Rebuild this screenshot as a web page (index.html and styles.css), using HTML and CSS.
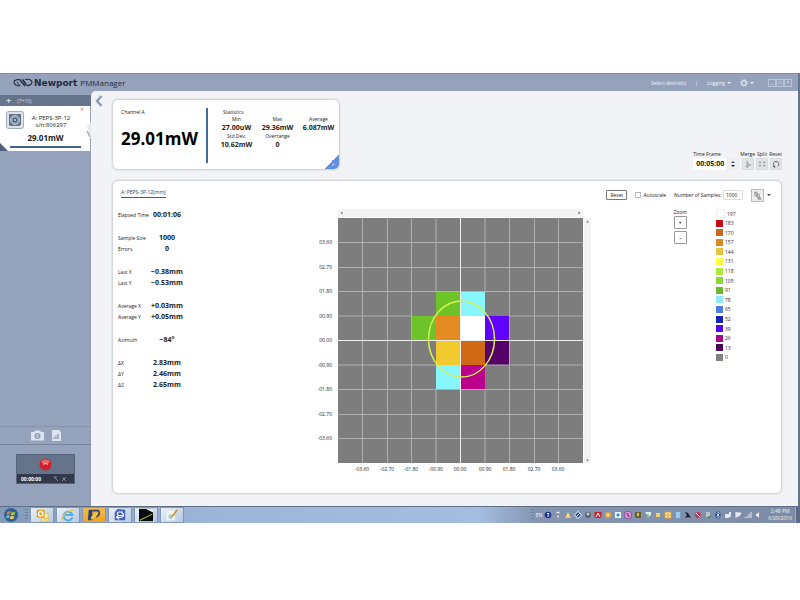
FILE: index.html
```html
<!DOCTYPE html>
<html lang="en">
<head>
<meta charset="utf-8">
<title>Newport PMManager</title>
<link rel="stylesheet" href="styles.css">
</head>
<body>
<div class="desktop">
<div class="window">
  <header class="titlebar">
    <div class="brand">
      <svg class="brand-mark" viewBox="0 0 20 10"><g fill="none" stroke="#23293a"><path d="M8 2C5 .8 1 2 1 4.500c0 2 3 3.500 6 3.500" stroke-width="1.100"/><path d="M5 3.500c-1.500 1 0 3 2.500 3.500" stroke-width=".9"/><path d="M7 2l5 6M9.500 1.500l4 5.500" stroke-width="1.400"/><path d="M12 1.500c4-.8 7 .5 7 2.500s-2.500 4-5.500 3.500" stroke-width="1.100"/></g></svg>
      <span class="brand-name">Newport</span>
      <span class="app-name">PMManager</span>
    </div>
    <nav class="menu">
      <button>Select device(s)</button>
      <span class="bar">|</span>
      <button>Logging <i class="caret"></i></button>
      <button aria-label="Settings" class="gear"><svg viewBox="0 0 8 8"><circle cx="4" cy="4" r="2.300" fill="none" stroke="#dfe5ef" stroke-width="1.300"/><circle cx="4" cy="4" r="3.400" fill="none" stroke="#dfe5ef" stroke-width="1" stroke-dasharray="1.300 1.370"/></svg> <i class="caret"></i></button>
      <div class="winctl"><button aria-label="Minimize">_</button><button aria-label="Maximize">□</button><button aria-label="Close">×</button></div>
    </nav>
  </header>
  <aside class="sidebar">
    <div class="sidehead"><b>+</b><span>(T+10)</span></div>
    <section class="device">
      <svg class="sensor" viewBox="0 0 18 18"><rect x=".5" y=".5" width="17" height="17" rx="2" fill="#dce3ec" stroke="#a3adbd"/><path d="M3 3h12v11l-2 1H4l-1-1z" fill="#66758b"/><circle cx="9" cy="9" r="4.500" fill="#8fa0b6" stroke="#c3cfdd" stroke-width=".8"/><circle cx="9" cy="9" r="2.300" fill="#4a5870"/><circle cx="9" cy="9" r="1" fill="#d7e2ee"/></svg>
      <div class="device-name">A: PEPS-3P-12<br>s/n:806297</div>
      <button class="close" aria-label="Remove device">×</button>
      <strong>29.01mW</strong>
      <i class="fold"></i>
    </section>
    <div class="side-tools">
      <button aria-label="Snapshot"><svg width="15" height="11" viewBox="0 0 15 11"><path d="M1 2h3l1-1.500h5L11 2h3v8.500H1z" fill="#dce3ee"/><circle cx="7.500" cy="6" r="3" fill="#8f9db4"/><circle cx="7.500" cy="6" r="1.700" fill="#dce3ee"/><path d="M5 5l2 1.500L10 5" fill="none" stroke="#75849e" stroke-width=".8"/></svg></button>
      <button aria-label="Report"><svg width="9" height="11" viewBox="0 0 9 11"><path d="M0 0h7l2 2v9H0z" fill="#dce3ee"/><path d="M2 9V7m2 2V5.500M6 9V4" stroke="#8797b0" stroke-width="1.200"/></svg></button>
    </div>
    <div class="rec-area"><div class="recorder">
      <button class="record" aria-label="Record"><svg width="13" height="13" viewBox="0 0 13 13"><circle cx="6.500" cy="6.500" r="6" fill="#d0202c"/><ellipse cx="6.500" cy="3.800" rx="3.800" ry="2.300" fill="#e8686c"/><path d="M4 6.500c1-1 4-1 5 0" stroke="#f8c9ca" fill="none" stroke-width=".9"/></svg></button>
      <div class="rec-foot"><span>00:00:00</span><svg width="14" height="6" viewBox="0 0 14 6"><path d="M1 1h3M1 1l4 4M9 5l4-4M9.500 1.500L13 5" stroke="#9aa3b2" stroke-width=".8" fill="none"/></svg></div>
    </div></div>
    <svg class="grip" viewBox="0 0 5 18"><path d="M5 0v18L1 12l2-3-2-3z" fill="#e4e7ec"/><path d="M1 10L4 16" stroke="#a9b0bc" stroke-width="1.500"/></svg>
  </aside>
  <main class="content">
    <button class="back" aria-label="Back"><svg width="8" height="12" viewBox="0 0 8 12"><path d="M6.500 1L2 6l4.500 5" fill="none" stroke="#8d99b5" stroke-width="2.400"/></svg></button>
    <div class="top">
      <section class="card channel">
        <div class="reading"><span>Channel A</span><strong>29.01mW</strong></div>
        <div class="statistics">
          <h2>Statistics</h2>
          <dl>
            <div><dt>Min</dt><dd>27.00uW</dd></div>
            <div><dt>Max</dt><dd>29.36mW</dd></div>
            <div><dt>Average</dt><dd>6.087mW</dd></div>
            <div><dt>Std.Dev.</dt><dd>10.62mW</dd></div>
            <div><dt>Overrange</dt><dd>0</dd></div>
          </dl>
        </div>
        <i class="corner">»</i>
      </section>
      <div class="timing">
        <label class="tf"><span>Time Frame</span><span class="tf-row"><input value="00:05:00"><i class="spin"><i class="up"></i><i class="caret"></i></i></span></label>
        <label><span>Merge</span><button><svg viewBox="0 0 12 12"><path d="M5 2v7M3 8l2 2 2-2M5 3l2 4h3" stroke="#a4a6aa" fill="none" stroke-width="1.300"/></svg></button></label>
        <label><span>Split</span><button><svg viewBox="0 0 12 12"><path d="M2 3h3v2H2zM7 3h3v2H7zM2 7h3v2H2zM7 7h3v2H7z" fill="#a4a6aa"/></svg></button></label>
        <label><span>Reset</span><button><svg viewBox="0 0 12 12"><path d="M4.500 9.200A3.300 3.300 0 1 1 8 9" stroke="#55585f" fill="none" stroke-width="1.100"/><path d="M2 8.500l3-.5v3z" fill="#55585f"/></svg></button></label>
      </div>
    </div>
    <section class="card position">
      <div class="toolbar">
        <a href="#sensor" class="tab">A: PEPS-3P-12[mm]</a>
        <button class="reset">Reset</button>
        <label class="auto"><input type="checkbox">Autoscale</label>
        <label class="samples">Number of Samples: <input value="1000"></label>
        <button class="tool" aria-label="Graph options"><svg viewBox="0 0 12 12"><path d="M3 2.500h2.500v4H3zM5.500 4.500H8v4H5.500zM3 2l6 8M7 8.500h2.500v2H7z" fill="none" stroke="#888" stroke-width=".8"/></svg></button><i class="caret dark"></i>
      </div>
      <div class="panel">
        <div class="measures">
          <dl><div><dt>Elapsed Time</dt><dd>00:01:06</dd></div></dl>
          <dl><div><dt>Sample Size</dt><dd>1000</dd></div><div><dt>Errors</dt><dd>0</dd></div></dl>
          <dl><div><dt>Last X</dt><dd>−0.38mm</dd></div><div><dt>Last Y</dt><dd>−0.53mm</dd></div></dl>
          <dl><div><dt>Average X</dt><dd>+0.03mm</dd></div><div><dt>Average Y</dt><dd>+0.05mm</dd></div></dl>
          <dl><div><dt>Azimuth</dt><dd>−84°</dd></div></dl>
          <dl><div><dt>ΔX</dt><dd>2.83mm</dd></div><div><dt>ΔY</dt><dd>2.46mm</dd></div><div><dt>Δδ</dt><dd>2.65mm</dd></div></dl>
        </div>
        <svg class="plot" viewBox="0 0 274 266" role="img" aria-label="Beam position">
          <path d="M20 0h245v8H20zM266 9h7v245h-7z" fill="#f3f3f3"/>
          <path d="M22.500 4l2-1.500v3zM262.500 4l-2-1.500v3zM268 13.500l1.500-2 1.500 2zM268 250.500l1.500 2 1.500-2z" fill="#777"/>
          <path d="M20 9h245v245H20z" fill="#7d7d7d"/>
          <path d="M118 82h24v25h-24zM93 107h25v24H93z" fill="#6cc428"/>
          <path d="M142 82h25v25h-25zM118 156h24v24h-24z" fill="#88f6ff"/>
          <path d="M118 107h24v24h-24z" fill="#e68a22"/>
          <path d="M142 107h25v24h-25z" fill="#fff"/>
          <path d="M167 107h24v24h-24z" fill="#6100ff"/>
          <path d="M118 131h24v25h-24z" fill="#f2ca2d"/>
          <path d="M142 131h25v25h-25z" fill="#d06a17"/>
          <path d="M167 131h24v25h-24z" fill="#56006a"/>
          <path d="M142 156h25v24h-25z" fill="#bd008b"/>
          <path d="M44.500 9v245M69.500 9v245M93.500 9v245M118 9v73M118 180v74M167 9v73M167 180v74M191.500 9v245M216.500 9v245M240.500 9v245M20 33.500h245M20 58.500h245M20 82.500h245M20 107h73M191 107h74M20 156h98M167 156h98M20 180.500h245M20 205.500h245M20 229.500h245" stroke="#b0b0b0"/>
          <path d="M142.500 9v245M20 131.500h245" stroke="#f0f0f0"/>
          <ellipse cx="143.500" cy="130" rx="33" ry="38" fill="none" stroke="#d5f052" stroke-width="1.500"/>
          <g class="ylab"><text x="14" y="35">03.60</text><text x="14" y="60">02.70</text><text x="14" y="84">01.80</text><text x="14" y="109">00.90</text><text x="14" y="133">00.00</text><text x="14" y="158">-00.90</text><text x="14" y="182">-01.80</text><text x="14" y="207">-02.70</text><text x="14" y="231">-03.60</text></g>
          <g class="xlab"><text x="44" y="262">-03.60</text><text x="69" y="262">-02.70</text><text x="93" y="262">-01.80</text><text x="118" y="262">-00.90</text><text x="142" y="262">00.00</text><text x="167" y="262">00.90</text><text x="191" y="262">01.80</text><text x="216" y="262">02.70</text><text x="240" y="262">03.60</text></g>
        </svg>
        <div class="zoom"><span>Zoom</span><button>+</button><button>-</button></div>
        <ul class="legend">
          <li class="c197">197</li><li class="c183">183</li><li class="c170">170</li><li class="c157">157</li><li class="c144">144</li><li class="c131">131</li><li class="c118">118</li><li class="c105">105</li><li class="c91">91</li><li class="c78">78</li><li class="c65">65</li><li class="c52">52</li><li class="c39">39</li><li class="c26">26</li><li class="c13">13</li><li class="c0">0</li>
        </ul>
      </div>
    </section>
  </main>
</div>
<footer class="taskbar">
  <button class="start" aria-label="Start"><svg width="16" height="16" viewBox="0 0 16 16"><circle cx="8" cy="8" r="7.500" fill="#2f5f96" stroke="#7fa1c7"/><path d="M4 5c1.500-1 2.500-1 3.700-.4L7 7.600c-1-.6-2-.6-3.500.2z" fill="#e87b35"/><path d="M8.500 4.900c1.200.6 2.500.5 3.800-.1l-.8 3c-1.200.6-2.300.6-3.600.1z" fill="#9ccc45"/><path d="M3.300 8.700c1.300-.7 2.400-.8 3.500-.1L6 11.500c-1-.6-2-.6-3.400 0z" fill="#58aee8"/><path d="M7.600 8.900c1.200.5 2.500.5 3.700 0l-.8 2.900c-1.200.6-2.300.5-3.600 0z" fill="#f3d04a"/></svg></button>
  <i class="handle"></i>
  <button class="task" aria-label="Outlook"><svg viewBox="0 0 16 16"><path d="M8 6h7v9H7z" fill="#fff0b5" stroke="#e0b850"/><path d="M2 2h9v9H2z" fill="#e8a01b"/><circle cx="6.500" cy="6.500" r="2.500" stroke="#fff" stroke-width="1.500" fill="none"/><path d="M8 11l3.500 2 3.500-2" stroke="#d8a52c" fill="none"/></svg></button>
  <button class="task" aria-label="Internet Explorer"><svg viewBox="0 0 16 16"><path d="M13 10.500A5 5 0 1 1 13 8H4" fill="none" stroke="#4fb0e6" stroke-width="2.400"/><path d="M2 14C-.5 11 9 1 15 3" fill="none" stroke="#e9bc45" stroke-width="1.200"/></svg></button>
  <button class="task active" aria-label="PMManager"><svg viewBox="0 0 16 16"><path d="M2 2h4v12H1z" fill="#28436e"/><path d="M6 3h7c2 2 1 6-2 7l-4 1" fill="none" stroke="#354663" stroke-width="2"/><path d="M4 13c1-5 5-7 8-7l-2 5z" fill="#f7c04a"/></svg></button>
  <button class="task" aria-label="Remote tool"><svg viewBox="0 0 16 16"><path d="M5 1l9 1v12H2V5z" fill="#4662c0"/><path d="M4 10.500h5.500a2.500 2.500 0 0 0 0-5M7 8l-3 2.500L7 13M12 8.500H7a2 2 0 0 1 0-4h4" fill="none" stroke="#fff" stroke-width="1.200"/></svg></button>
  <button class="task" aria-label="Beam viewer"><svg viewBox="0 0 16 16"><path d="M0 1h16v14H0z" fill="#080a0b"/><path d="M1 14L15 7" stroke="#9dc348" stroke-width="1.200"/><path d="M8 1h8v4z" fill="#e8edf0"/></svg></button>
  <button class="task" aria-label="Paint"><svg viewBox="0 0 16 16"><path d="M2 3h9v11H2z" fill="#f3f4ed"/><path d="M4 11c-1-4 4-5 5-2s-3 5-5 2z" fill="#a8c9df"/><path d="M8 10L14 2" stroke="#c49639" stroke-width="2"/></svg></button>
  <div class="tray">
    <i class="handle"></i><span>EN</span>
    <svg viewBox="0 0 8 8"><circle cx="4" cy="4" r="3.300" fill="#1a329b"/><path d="M3 3q1-2 2 0L4 4.500V6" stroke="#fff" fill="none"/></svg>
    <svg viewBox="0 0 8 8"><path d="M2.500 1.500h3M3 5.500h2" stroke="#e7edf3" stroke-width="1.500"/></svg>
    <svg viewBox="0 0 8 8"><path d="M1 7l3-6 3 6z" fill="#f4cb58"/><path d="M4 3v2" stroke="#fff"/></svg>
    <svg viewBox="0 0 8 8"><path d="M4 0l4 4-4 4-4-4z" fill="#fff"/><path d="M4 1l3 3-3 3-3-3z" fill="#1a4fae"/><path d="M2.500 5.500l3-3" stroke="#fff"/></svg>
    <svg viewBox="0 0 8 8"><circle cx="4" cy="4" r="3" fill="#596270"/><circle cx="4" cy="3" r="1.500" fill="#b9d2ba"/></svg>
    <svg viewBox="0 0 8 8"><path d="M.5 1h7v6h-7z" fill="#c91e2c"/><path d="M2 6l2-4 2 4" stroke="#fff" fill="none"/></svg>
    <svg viewBox="0 0 8 8"><circle cx="4" cy="4" r="3" fill="#eda839"/><circle cx="4" cy="4" r="1.200" fill="#fff0ad"/></svg>
    <svg viewBox="0 0 8 8"><path d="M1 1h6v6H1z" fill="#ecf7fb"/><path d="M2 4l2-2 2 2-2 2z" fill="#3899c9"/></svg>
    <svg viewBox="0 0 8 8"><path d="M1 1h6v6H1z" fill="#fff" stroke="#9b2c9b"/><path d="M3 6V2l2 4V2" stroke="#862086" fill="none"/></svg>
    <svg viewBox="0 0 8 8"><path d="M1 1h6v6H1z" fill="#6a622b"/><path d="M3 2h2v3H3z" fill="#edb946"/></svg>
    <svg viewBox="0 0 8 8"><path d="M1 1h6v3L4 6z" fill="#dff1ed"/><path d="M1 4h4" stroke="#45a080"/></svg>
    <svg viewBox="0 0 8 8"><path d="M2 2h4v4H2z" fill="#f0d46c"/></svg>
    <svg viewBox="0 0 8 8"><path d="M1 1h6v6H1z" fill="#fff2bd" stroke="#e69c25"/><circle cx="4" cy="4" r="1.300" fill="none" stroke="#e69c25"/></svg>
    <svg viewBox="0 0 8 8"><path d="M1 1h6v6H1z" fill="#69a2ce"/><path d="M3 1v6M5 1v6" stroke="#dceaf4"/></svg>
    <svg viewBox="0 0 8 8"><path d="M1 1l3 1 3 5-3-1-3 1 2-3z" fill="#171d29"/></svg>
    <svg viewBox="0 0 8 8"><circle cx="4" cy="4" r="3" fill="#c53b5c"/><path d="M2 2l4 4" stroke="#fff"/></svg>
    <svg viewBox="0 0 8 8"><path d="M2 1h4v5H2z" fill="#b9c7cd"/><path d="M4 5l1 2 2-3" stroke="#24883b" fill="none"/></svg>
    <svg viewBox="0 0 8 8"><ellipse cx="4" cy="4" rx="2.500" ry="3.500" fill="#1b4b8e"/><path d="M2.500 2.500l3 3L4 7V1l1.500 1.500-3 3" stroke="#fff" stroke-width=".6" fill="none"/></svg>
    <svg viewBox="0 0 8 8"><path d="M1 3h4v4H1zM5 1h2v5H5z" fill="#e3e9ef"/></svg>
    <svg viewBox="0 0 8 8"><path d="M2 1v6M2 2h5L5 5H2" stroke="#f5f7f9" fill="#dbe2e9"/></svg>
    <svg viewBox="0 0 8 8"><path d="M1 7V6m2 1V5m2 2V3m2 4V1" stroke="#e8edf2"/></svg>
    <svg viewBox="0 0 8 8"><path d="M2 3h1l2-2v6L3 5H2z" fill="#f2f5f8"/></svg>
    <time>2:48 PM<br>6/20/2016</time>
  </div>
  <button class="peek" aria-label="Show desktop"></button>
</footer>
</div>
</body>
</html>
```
FILE: styles.css
```css
* { box-sizing: border-box; }
body { margin: 0; background: #fff; font: 5px/8px "Open Sans", "Noto Sans", sans-serif; color: #222; }
button, input { font: inherit; color: inherit; margin: 0; padding: 0; border: 0; background: none; }
dl, dd, ul, h2 { margin: 0; padding: 0; font-weight: normal; font-size: inherit; }
i { font-style: normal; }
svg { display: block; }
.desktop { display: flex; flex-direction: column; min-height: 100vh; padding: 73px 0 77px; }
.window { flex: 1; display: grid; grid-template: 17px 1fr / 91px 1fr; background: #95a2bb; border-top: 1px solid #7e8ca6; border-right: 2px solid #66758f; }

.titlebar { grid-column: 1 / 3; display: flex; justify-content: space-between; align-items: center; padding: 0 6px 0 13px; }
.brand { display: flex; align-items: center; color: #252b3b; }
.brand-mark { width: 20px; height: 10px; margin-right: 1px; }
.brand-name { font: bold 9px/12px "DejaVu Sans", sans-serif; }
.app-name { font-size: 8px; line-height: 12px; margin-left: 3px; }
.menu { display: flex; align-items: center; gap: 9px; color: #f0f3f8; }
.menu > button { display: flex; align-items: center; gap: 2px; }
.gear svg { width: 8px; height: 8px; }
.caret { display: inline-block; border: 2px solid transparent; border-top-color: currentColor; border-bottom: 0; }
.winctl { display: flex; margin-left: 5px; }
.winctl button { width: 8px; height: 8px; border: 1px solid #b9c4d6; line-height: 5px; }

.sidebar { position: relative; display: flex; flex-direction: column; padding-top: 4px; }
.sidehead { display: flex; align-items: center; gap: 6px; height: 11px; padding-left: 6px; background: #66758b; color: #d4dbe5; }
.sidehead b { font-size: 9px; }
.device { position: relative; display: grid; grid-template-columns: 18px 1fr 8px; column-gap: 2px; height: 45px; margin-right: 1px; padding: 0 4px 0 6px; background: #fff; }
.sensor { width: 18px; height: 18px; margin-top: 5px; }
.device-name { padding: 9px 0 0; font-size: 6px; line-height: 7px; text-align: center; white-space: nowrap; }
.close { align-self: start; color: #8090ad; font-size: 7px; }
.device strong { grid-column: 1 / 4; margin: 0 5px 0 4px; padding-bottom: 3px; border-bottom: 2px solid #45638f; text-align: center; font-size: 8px; line-height: 10px; color: #222; align-self: start; }
.fold { position: absolute; left: 0; bottom: 0; border: 4px solid #52617b; border-top-color: transparent; border-right-color: transparent; }
.grip { position: absolute; right: 0; top: 30px; width: 5px; height: 18px; }
.side-tools { display: flex; justify-content: center; align-items: center; gap: 7px; height: 19px; margin-top: auto; border-top: 1px solid #8794af; border-bottom: 1px solid #77859f; }
.rec-area { height: 61px; padding: 9px 16px; }
.recorder { display: flex; flex-direction: column; height: 30px; background: #66748b; border: 1px solid #56647b; }
.record { flex: 1; display: flex; justify-content: center; align-items: center; }
.rec-foot { display: flex; justify-content: space-between; align-items: center; height: 9px; padding: 0 7px 0 4px; background: #303a4a; color: #fff; }
.rec-foot span { font-weight: bold; }

.content { position: relative; display: flex; flex-direction: column; gap: 10px; padding: 8px 16px 12px 21px; background: #f2f3f6; border-top-left-radius: 5px; }
.back { position: absolute; left: 4px; top: 4px; }
.card { background: #fff; border: 1px solid #d5d6d9; border-radius: 6px; box-shadow: 0 0 0 1px #e6e7e9; }
.top { display: flex; justify-content: space-between; align-items: flex-end; }
.channel { position: relative; display: flex; width: 34%; min-width: 228px; height: 71px; padding: 8px 0 6px 8px; overflow: hidden; }
.reading { display: flex; flex-direction: column; width: 89px; border-right: 2px solid #426c9c; }
.reading strong { margin-top: 11px; font-size: 17px; line-height: 24px; color: #000; }
.statistics { flex: 1; padding-left: 8px; }
.statistics h2 { padding-left: 7px; line-height: 8px; }
.statistics dl { display: grid; grid-template-columns: repeat(3, 41px); row-gap: 1px; text-align: center; }
.statistics dd { font-weight: bold; font-size: 7px; line-height: 9px; color: #222; }
.statistics dt { line-height: 7px; }
.corner { position: absolute; right: 0; bottom: 0; width: 15px; height: 15px; padding: 6px 0 0 8px; background: linear-gradient(135deg, transparent 50%, #628ede 50%); color: #fff; }

.timing { display: flex; gap: 1px; }
.timing label { display: flex; flex-direction: column; align-items: center; }
.timing .tf { align-items: flex-start; }
.timing button { width: 12px; height: 12px; background: #e3e4e7; border: 1px solid #d9dadd; border-radius: 1px; }
.tf-row { display: flex; background: #fff; }
.tf input { width: 34px; padding-left: 3px; font-size: 7px; font-weight: bold; line-height: 10px; color: #222; }
.spin { display: flex; flex-direction: column; justify-content: center; align-items: center; gap: 2px; width: 12px; height: 12px; background: #eceef1; }
.up { border: 2px solid transparent; border-bottom-color: #555; border-top: 0; }

.position { flex: 1; padding: 6px 10px 14px 5px; }
.toolbar { display: flex; align-items: center; height: 16px; }
.tab { margin: 0 auto auto 3px; color: #223f70; text-decoration: none; border-bottom: 1px solid #315c9b; line-height: 10px; }
.reset { width: 21px; height: 10px; border: 1px solid #777; border-radius: 1px; line-height: 7px; }
.auto { display: flex; align-items: center; gap: 2px; margin: 0 8px; }
.auto input { appearance: none; width: 6px; height: 6px; border: 1px solid #bbb; }
.samples input { width: 20px; height: 10px; padding-left: 2px; border: 1px solid #ddd; }
.tool { width: 13px; height: 13px; margin: 0 3px 0 8px; border: 1px solid #bbb; background: #eee; }
.dark { color: #444; }
.panel { display: flex; padding-top: 6px; }
.measures { display: flex; flex-direction: column; gap: 12px; width: 200px; }
.measures dl div { display: grid; grid-template-columns: 33px 32px; align-items: center; justify-items: start; height: 11px; }
.measures dd { justify-self: center; font-weight: bold; font-size: 7px; line-height: 11px; color: #222; white-space: nowrap; }
.plot { width: 274px; flex: none; }
.plot text { font-size: 5px; fill: #222; }
.ylab { text-anchor: end; }
.xlab { text-anchor: middle; }
.zoom { display: flex; flex-direction: column; align-items: center; margin-left: auto; margin-right: 29px; }
.zoom button { width: 13px; height: 13px; margin-bottom: 2px; border: 1px solid #999; border-radius: 1px; font-weight: bold; color: #111; }
.zoom span { line-height: 7px; }
.legend { display: flex; flex-direction: column; justify-content: space-between; width: 55px; height: 153px; list-style: none; color: #422; }
.legend li { display: flex; align-items: center; gap: 2px; height: 9px; }
.legend li::before { content: ""; width: 7px; height: 7px; background: #fff; }
.legend .c197::before { border: 1px solid #f3eeee; }
.legend .c183::before { background: #c90d15; }
.legend .c170::before { background: #c8691f; }
.legend .c157::before { background: #d88a25; }
.legend .c144::before { background: #e6c240; }
.legend .c131::before { background: #fffb45; }
.legend .c118::before { background: #b0e83c; }
.legend .c105::before { background: #8cd83c; }
.legend .c91::before { background: #6bb92f; }
.legend .c78::before { background: #94e9f8; }
.legend .c65::before { background: #4f7fe0; }
.legend .c52::before { background: #1524b2; }
.legend .c39::before { background: #5808e8; }
.legend .c26::before { background: #a9078a; }
.legend .c13::before { background: #480559; }
.legend .c0::before { background: #828282; }

.taskbar { display: flex; align-items: center; gap: 2px; height: 17px; padding-left: 3px; background: linear-gradient(90deg, #8499b6, #9bb4d8 25%, #a4bde0 60%, #8595b0 67%, #7d8ca6); border-top: 1px solid #5f6f88; }
.start { width: 17px; margin-right: 3px; }
.handle { width: 3px; height: 12px; background: repeating-linear-gradient(#6f82a0 0 1px, transparent 1px 3px); }
.task { display: flex; justify-content: center; align-items: center; width: 24px; height: 16px; border: 1px solid #8298b8; background: linear-gradient(135deg, #e9eff6, #b8cae2); }
.task.active { background: linear-gradient(#efba55, #f3a21f); }
.task svg { width: 14px; height: 14px; }
.tray { display: flex; align-items: center; gap: 2px; margin-left: auto; color: #f0f3f8; }
.tray svg { width: 8px; height: 8px; }
.tray time { margin: 0 1px 0 4px; text-align: center; line-height: 7px; }
.peek { width: 5px; height: 16px; background: #5d6c84; border-left: 1px solid #9ba8bd; }
```
